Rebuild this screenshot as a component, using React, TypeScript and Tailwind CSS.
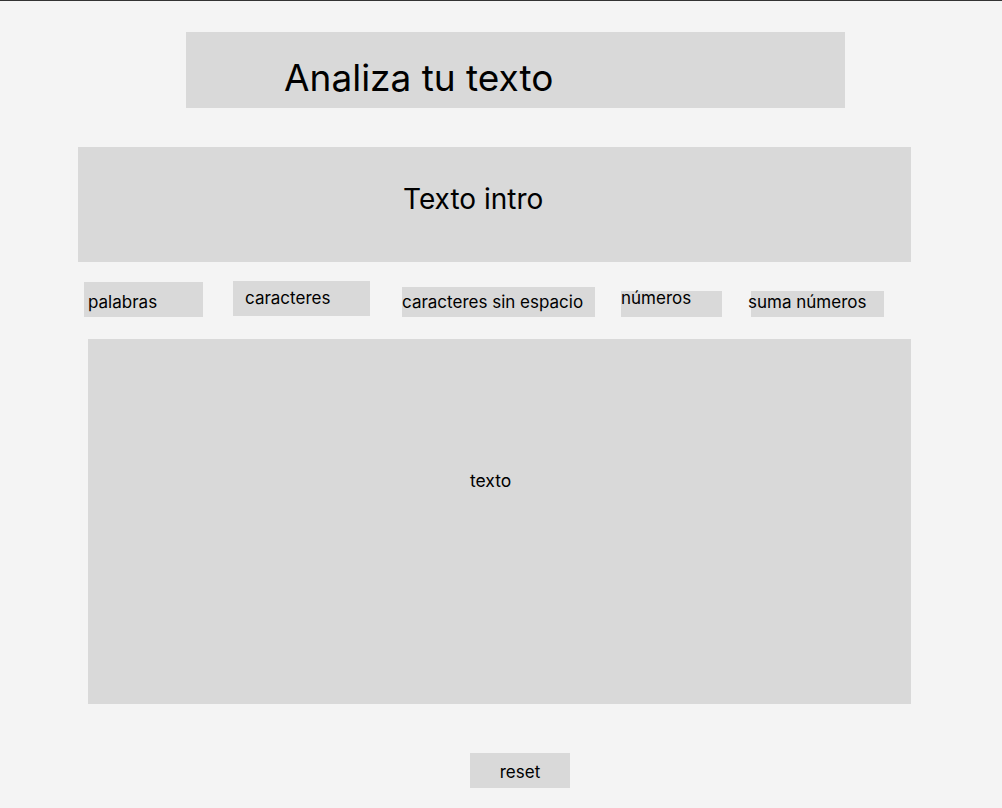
export default function App() {
  return (
    <div className="min-h-[808px] w-[1002px] overflow-hidden border-t border-[#333333] bg-[#f4f4f4] text-black leading-none" style={{ fontFamily: 'Inter, "Noto Sans", sans-serif' }}>
      <div className="ml-[186px] mt-[31px] h-[76px] w-[659px] bg-[#d9d9d9] pl-[98px] pt-[27px] text-[37px] whitespace-nowrap">
        Analiza tu texto
      </div>
      <div className="ml-[78px] mt-[39px] h-[115px] w-[833px] bg-[#d9d9d9] pl-[325px] pt-[38px] text-[28px] whitespace-nowrap">
        Texto intro
      </div>
      <div className="mt-[19px] flex items-start text-[17px]">
        <div className="ml-[84px] mt-[1px] h-[35px] w-[119px] bg-[#d9d9d9] pl-[4px] pt-[12px]">palabras</div>
        <div className="ml-[30px] h-[35px] w-[137px] bg-[#d9d9d9] pl-[12px] pt-[9px]">caracteres</div>
        <div className="ml-[32px] mt-[6px] h-[30px] w-[193px] bg-[#d9d9d9] pt-[7px] whitespace-nowrap">caracteres sin espacio</div>
        <div className="ml-[26px] mt-[10px] h-[26px] w-[101px] bg-[#d9d9d9]">
          <div className="-mt-[1px]">números</div>
        </div>
        <div className="ml-[29px] mt-[10px] h-[26px] w-[133px] bg-[#d9d9d9] pt-[3px] whitespace-nowrap">
          <div className="-ml-[3px]">suma números</div>
        </div>
      </div>
      <div className="ml-[88px] mt-[22px] h-[365px] w-[823px] bg-[#d9d9d9] pl-[382px] pt-[133px] text-[17.5px]">
        texto
      </div>
      <div className="ml-[470px] mt-[49px] h-[35px] w-[100px] bg-[#d9d9d9] pt-[11px] text-center text-[17px]">
        reset
      </div>
    </div>
  );
}
